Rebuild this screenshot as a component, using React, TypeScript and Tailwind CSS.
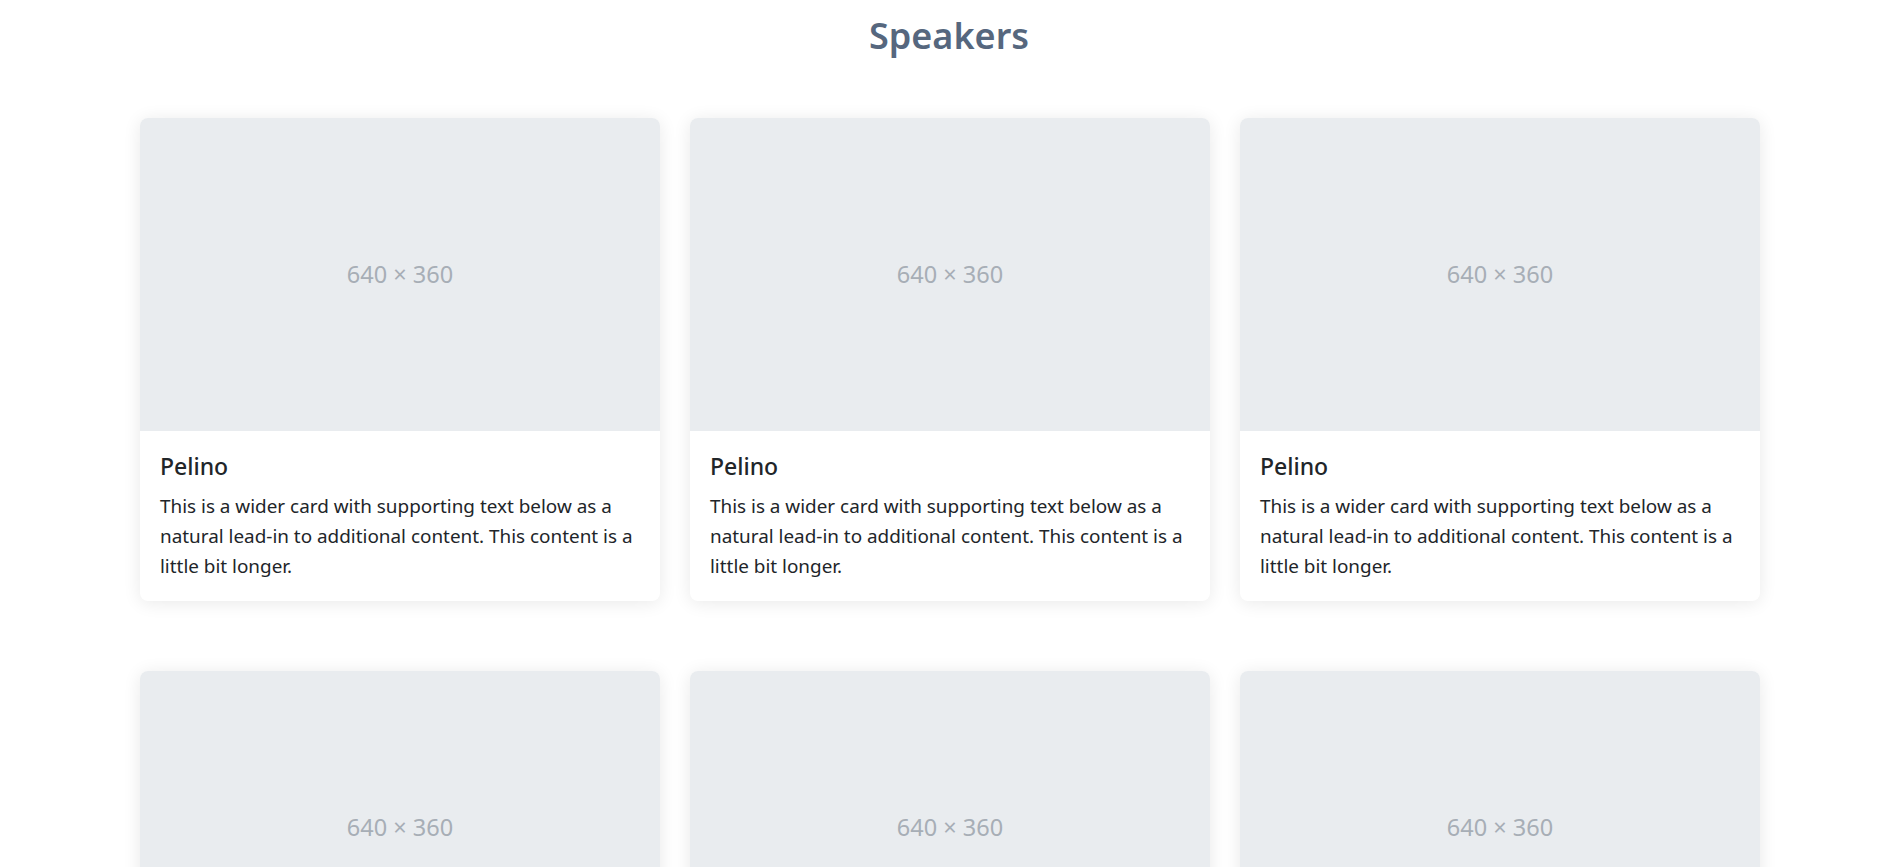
const speakers = Array.from({ length: 6 }, (_, i) => ({
  id: i,
  name: 'Pelino',
  text: 'This is a wider card with supporting text below as a natural lead-in to additional content. This content is a little bit longer.',
}));

function SpeakerCard({ name, text }: { name: string; text: string }) {
  return (
    <div className="bg-white rounded-[8px] overflow-hidden shadow-[0_2px_18px_rgba(0,0,0,0.09)]">
      <div className="h-[313px] bg-[#e9ecef] flex items-center justify-center">
        <span className="text-[23.5px] text-[#a7aeb6]">640 × 360</span>
      </div>
      <div className="p-[20px]">
        <h5 className="text-[23px] leading-[30px] font-medium text-[#212529] mb-[10px]">{name}</h5>
        <p className="text-[18.9px] leading-[30px] text-[#212529]">{text}</p>
      </div>
    </div>
  );
}

export default function App() {
  return (
    <div className="min-h-screen bg-white font-['Noto_Sans','Open_Sans',sans-serif]">
      <h2 className="pt-[12px] text-center text-[36px] leading-[48px] font-semibold text-[#56677e]">
        Speakers
      </h2>

      <div className="ml-[140px] w-[1620px] mt-[58px] grid grid-cols-3 gap-x-[30px] gap-y-[70px] pb-10">
        {speakers.map((s) => (
          <SpeakerCard key={s.id} name={s.name} text={s.text} />
        ))}
      </div>
    </div>
  );
}
